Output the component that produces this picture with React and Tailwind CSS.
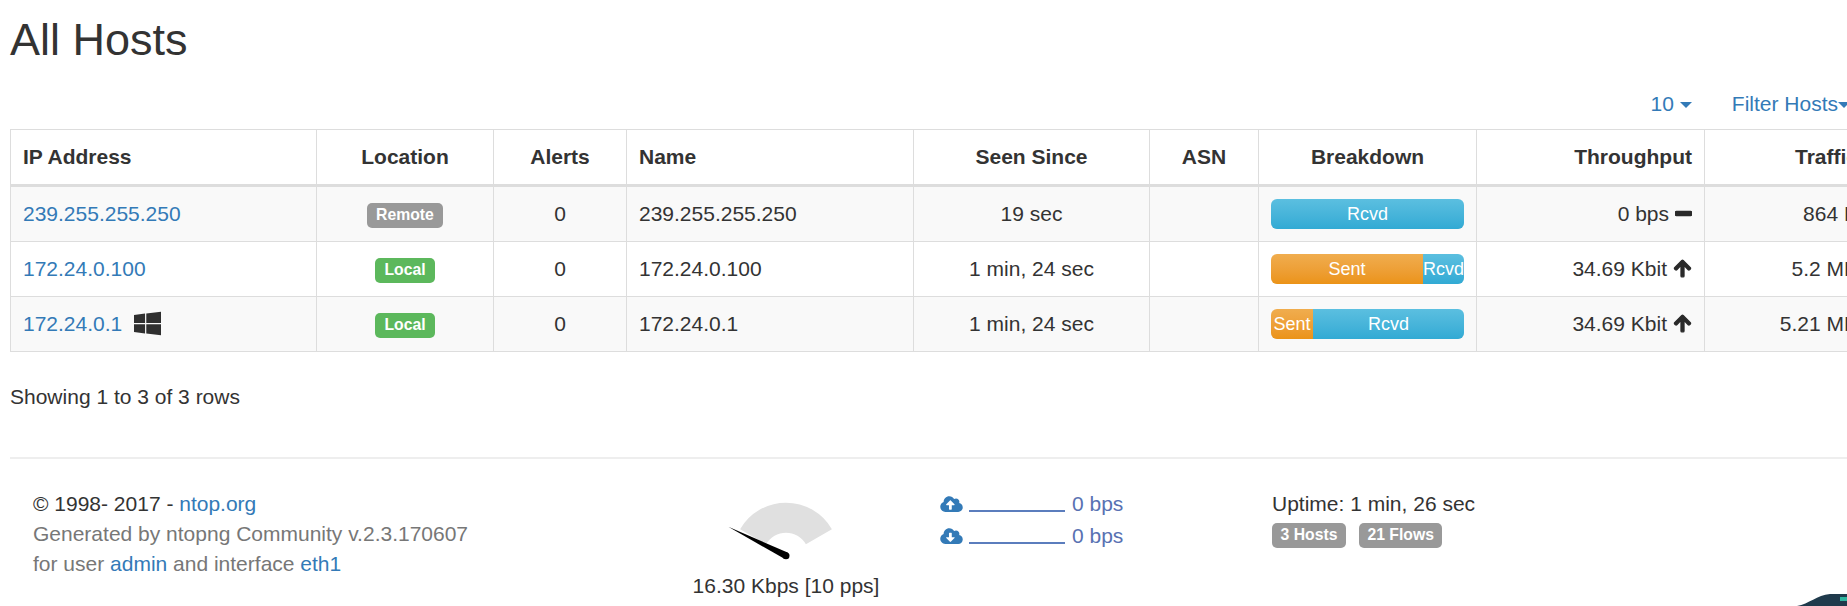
import React from "react";
import { FaWindows, FaArrowUp, FaMinus, FaCloudUploadAlt, FaCloudDownloadAlt } from "react-icons/fa";

const Lbl = ({ c, children, tight }) => (
  <span className={`inline-flex h-[25px] items-center rounded-[5px] text-[15.75px] font-bold leading-none text-white ${tight ? "px-[8.5px]" : "px-[9.5px]"} ${c}`}>{children}</span>
);
const Link = ({ children }) => <a className="text-[#337ab7]">{children}</a>;

const Bar = ({ sent, rcvd }) => (
  <div className="flex h-[30px] overflow-hidden rounded-[6px] text-[18px] leading-[30px] text-white shadow-[inset_0_-1px_0_rgba(0,0,0,0.15)]">
    {sent > 0 && (
      <div className="shrink-0 overflow-hidden bg-gradient-to-b from-[#f0ad4e] to-[#eb9316] text-center" style={{ width: sent }}>Sent</div>
    )}
    <div className="flex-1 overflow-hidden whitespace-nowrap bg-gradient-to-b from-[#5bbfe0] to-[#31aad4] text-center">{rcvd}</div>
  </div>
);

const rows = [
  { ip: "239.255.255.250", loc: "Remote", since: "19 sec", sent: 0, thr: "0 bps", icon: "minus", traffic: "864 B" },
  { ip: "172.24.0.100", loc: "Local", since: "1 min, 24 sec", sent: 152, thr: "34.69 Kbit", icon: "up", traffic: "5.2 MB" },
  { ip: "172.24.0.1", loc: "Local", since: "1 min, 24 sec", sent: 42, thr: "34.69 Kbit", icon: "up", traffic: "5.21 MB", win: true },
];

const th = "border border-[#ddd] border-b-[3px] p-[12px] font-bold";
const td = "border border-[#ddd] p-[12px]";

export default function App() {
  return (
    <div className="relative h-[606px] w-[1847px] overflow-hidden bg-white font-['Liberation_Sans',Arial,sans-serif] text-[21px] leading-[30px] text-[#333]">
      <div className="ml-[10px] w-[1860px]">
        <h2 className="pt-[15px] text-[45px] font-normal leading-[49.5px]">All Hosts</h2>

        <div className="mb-[10px] mt-[24px] flex h-[30px] items-center justify-end gap-[40px] pr-[20px] text-[#337ab7]">
          <span className="flex items-center gap-[6px]">
            10
            <span className="mt-[2px] h-0 w-0 border-x-[6px] border-t-[6px] border-x-transparent border-t-[#337ab7]" />
          </span>
          <span className="flex items-center">
            Filter Hosts
            <span className="mt-[2px] h-0 w-0 border-x-[6px] border-t-[6px] border-x-transparent border-t-[#337ab7]" />
          </span>
        </div>

        <table className="w-[1860px] table-fixed border-collapse">
          <colgroup>
            <col className="w-[306px]" />
            <col className="w-[177px]" />
            <col className="w-[133px]" />
            <col className="w-[287px]" />
            <col className="w-[236px]" />
            <col className="w-[109px]" />
            <col className="w-[218px]" />
            <col className="w-[228px]" />
            <col className="w-[166px]" />
          </colgroup>
          <thead>
            <tr>
              <th className={`${th} text-left`}>IP Address</th>
              <th className={`${th} text-center`}>Location</th>
              <th className={`${th} text-center`}>Alerts</th>
              <th className={`${th} text-left`}>Name</th>
              <th className={`${th} text-center`}>Seen Since</th>
              <th className={`${th} text-center`}>ASN</th>
              <th className={`${th} text-center`}>Breakdown</th>
              <th className={`${th} text-right`}>Throughput</th>
              <th className={`${th} text-right`}>Traffic</th>
            </tr>
          </thead>
          <tbody>
            {rows.map((r, i) => (
              <tr key={r.ip} className={i % 2 === 0 ? "bg-[#f9f9f9]" : "bg-white"}>
                <td className={td}>
                  <span className="flex items-center gap-[12px]">
                    <Link>{r.ip}</Link>
                    {r.win && <FaWindows preserveAspectRatio="none" className="h-[27px] w-[27px] text-[#2f2f2f]" />}
                  </span>
                </td>
                <td className={`${td} text-center`}>
                  <span className="flex h-[30px] items-center justify-center pt-[3px]">
                    <Lbl c={r.loc === "Local" ? "bg-[#5cb85c]" : "bg-[#999]"}>{r.loc}</Lbl>
                  </span>
                </td>
                <td className={`${td} text-center`}>0</td>
                <td className={td}>{r.ip}</td>
                <td className={`${td} text-center`}>{r.since}</td>
                <td className={td}></td>
                <td className={td}><Bar sent={r.sent} rcvd="Rcvd" /></td>
                <td className={td}>
                  <span className="flex items-center justify-end gap-[6px]">
                    {r.thr}
                    {r.icon === "up" ? (
                      <FaArrowUp stroke="currentColor" strokeWidth="36" className="h-[19px] w-[19px] text-[#2a2a2a]" />
                    ) : (
                      <FaMinus stroke="currentColor" strokeWidth="50" className="h-[19px] w-[17px] text-[#2a2a2a]" />
                    )}
                  </span>
                </td>
                <td className={`${td} text-right`}>{r.traffic}</td>
              </tr>
            ))}
          </tbody>
        </table>

        <p className="mt-[30px]">Showing 1 to 3 of 3 rows</p>

        <hr className="mt-[45px] border-0 border-t-2 border-[#eee]" />

        <footer className="flex pl-[23px] pt-[30px]">
          <div className="w-[607px]">
            <div>© 1998- 2017 - <Link>ntop.org</Link></div>
            <div className="text-[#777]">Generated by ntopng Community v.2.3.170607</div>
            <div className="text-[#777]">for user <Link>admin</Link> and interface <Link>eth1</Link></div>
          </div>

          <div className="flex w-[292px] flex-col items-center">
            <svg width="120" height="78" viewBox="0 0 120 78" className="mt-[4px] block">
              <path d="M14.1 36.2 A53 53 0 0 1 105.9 36.2 L79.9 51.2 A23 23 0 0 0 40.1 51.2 Z" fill="#e0e0e0" />
              <path d="M2.3 33.7 L58.4 65.8 L61.6 59.6 Z" fill="#000" />
              <circle cx="60" cy="62.7" r="3.5" fill="#000" />
            </svg>
            <div>16.30 Kbps [10 pps]</div>
          </div>

          <div className="w-[340px] pl-[8px] text-[#5871b2]">
            {[FaCloudUploadAlt, FaCloudDownloadAlt].map((Icon, i) => (
              <div key={i} className="mb-[2px] flex h-[30px] items-center">
                <Icon className="h-[18px] w-[23px] text-[#337ab7]" />
                <span className="ml-[6px] mr-[7px] mt-[14px] h-[2px] w-[96px] bg-[#5b7dbd]" />
                0 bps
              </div>
            ))}
          </div>

          <div>
            <div>Uptime: 1 min, 26 sec</div>
            <div className="mt-[4px] flex gap-[13px]">
              <Lbl tight c="bg-[#999]">3 Hosts</Lbl>
              <Lbl tight c="bg-[#999]">21 Flows</Lbl>
            </div>
          </div>
        </footer>
      </div>

      <svg width="50" height="12" viewBox="0 0 50 12" className="absolute bottom-0 right-0 block">
        <path d="M0 12 C12 10 20 1 33 0 L50 0 L50 12 Z" fill="#1f3a4c" />
        <rect x="43" y="3" width="7" height="4" fill="#2fb5a0" />
      </svg>
    </div>
  );
}
